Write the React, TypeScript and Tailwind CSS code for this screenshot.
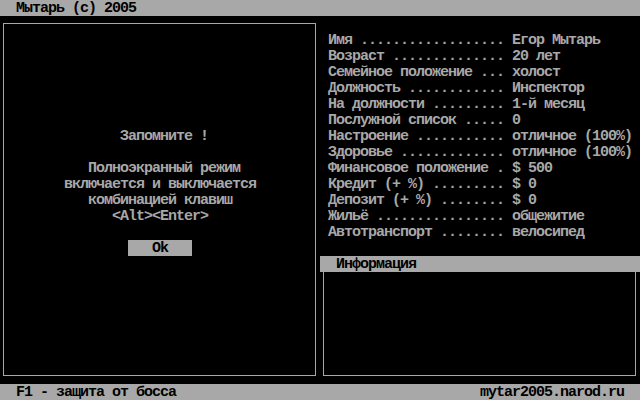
import React from "react";

const stats: [string, string][] = [
  ["Имя", "Егор Мытарь"],
  ["Возраст", "20 лет"],
  ["Семейное положение", "холост"],
  ["Должность", "Инспектор"],
  ["На должности", "1-й месяц"],
  ["Послужной список", "0"],
  ["Настроение", "отличное (100%)"],
  ["Здоровье", "отличное (100%)"],
  ["Финансовое положение", "$ 500"],
  ["Кредит (+ %)", "$ 0"],
  ["Депозит (+ %)", "$ 0"],
  ["Жильё", "общежитие"],
  ["Автотранспорт", "велосипед"],
];

function pad(label: string) {
  return label + " " + ".".repeat(Math.max(1, 22 - label.length - 1)) + " ";
}

const row = "h-4 leading-[18px] whitespace-pre";

export default function App() {
  return (
    <div
      className="w-[640px] h-[400px] bg-black text-[#a8a8a8] flex flex-col overflow-hidden text-[15px] tracking-[-1px] font-bold"
      style={{ fontFamily: '"Liberation Mono", "DejaVu Sans Mono", monospace' }}
    >
      <div className={`${row} bg-[#a8a8a8] text-black pl-4`}>Мытарь (c) 2005</div>

      <div className="flex-1 flex min-h-0">
        <div className="w-[320px] flex flex-col">
          <div className="flex-1 ml-[3px] mr-[4px] mt-[7px] mb-[8px] border border-[#a8a8a8] flex flex-col pt-[104px]">
            <div className={`${row} pl-[116px]`}>Запомните !</div>
            <div className="h-4" />
            <div className={`${row} pl-[84px]`}>Полноэкранный режим</div>
            <div className={`${row} pl-[60px]`}>включается и выключается</div>
            <div className={`${row} pl-[84px]`}>комбинацией клавиш</div>
            <div className={`${row} pl-[108px]`}>{"<Alt><Enter>"}</div>
            <div className="h-4" />
            <div className={`${row} ml-[124px] w-16 bg-[#a8a8a8] text-black`}>{"   Ok   "}</div>
          </div>
        </div>

        <div className="w-[320px] flex flex-col">
          <div className="flex flex-col pt-4 pl-2">
            {stats.map(([k, v]) => (
              <div key={k} className={row}>
                {pad(k) + v}
              </div>
            ))}
          </div>
          <div className={`${row} mt-4 bg-[#a8a8a8] text-black pl-4`}>Информация</div>
          <div className="flex-1 ml-[3px] mr-[4px] mb-[8px] border-x border-b border-[#a8a8a8]" />
        </div>
      </div>

      <div className={`${row} bg-[#a8a8a8] text-black flex justify-between px-4`}>
        <span>F1 - защита от босса</span>
        <span>mytar2005.narod.ru</span>
      </div>
    </div>
  );
}
